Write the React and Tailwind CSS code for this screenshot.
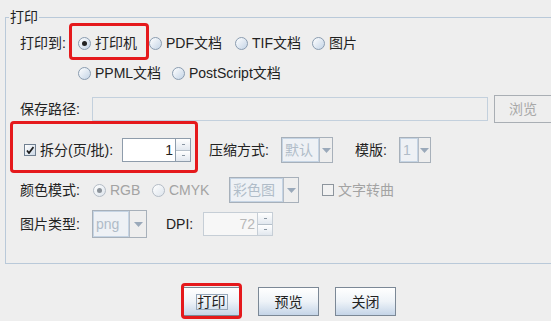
import React from "react";

const FONT = { fontFamily: '"Liberation Sans", "Noto Sans CJK SC", sans-serif' };

function Radio({ checked, disabled }) {
  return (
    <span
      className={
        disabled
          ? "w-[13px] h-[13px] rounded-full border border-[#b4bcc6] bg-linear-to-br from-white to-[#dde4ec] flex items-center justify-center shrink-0"
          : "w-[13px] h-[13px] rounded-full border border-[#8a9cb0] bg-linear-to-br from-white to-[#c4d4e6] flex items-center justify-center shrink-0"
      }
    >
      {checked && (
        <span
          className={
            disabled
              ? "w-[5px] h-[5px] rounded-full bg-[#8c939a]"
              : "w-[5px] h-[5px] rounded-full bg-[#222222]"
          }
        />
      )}
    </span>
  );
}

function RadioItem({ label, checked, disabled, w }) {
  return (
    <div className={"flex items-center shrink-0 " + w}>
      <Radio checked={checked} disabled={disabled} />
      <span
        className={
          disabled
            ? "ml-[4px] text-[#a3a3a3] whitespace-nowrap"
            : "ml-[4px] text-[#222222] whitespace-nowrap"
        }
      >
        {label}
      </span>
    </div>
  );
}

function Arrow() {
  return (
    <svg width="9" height="5" viewBox="0 0 9 5">
      <path d="M0 0 H9 L4.5 5 Z" fill="#9aa9ba" />
    </svg>
  );
}

function Combo({ text, w, tw, h }) {
  return (
    <div className={"flex shrink-0 border border-[#a7b0ba] bg-[#eeeeee] " + w + " " + h}>
      <div className={"flex items-center border border-[#c5d4e4] bg-[#eef1f5] pl-[2px] text-[#b0bcc8] overflow-hidden whitespace-nowrap " + tw}>
        {text}
      </div>
      <div className="flex-1 flex items-center justify-center border-l border-[#b4bcc6]">
        <Arrow />
      </div>
    </div>
  );
}

function Spinner({ value, w, disabled, h }) {
  return (
    <div
      className={
        "flex shrink-0 border " +
        (disabled ? "border-[#c6ced6] " : "border-[#8e9cab] ") +
        w +
        " " +
        h
      }
    >
      <div
        className={
          disabled
            ? "flex-1 flex items-center justify-end pr-[2px] bg-[#f7f7f7] text-[#b8b8b8]"
            : "flex-1 flex items-center justify-end pr-[2px] bg-white text-[#222222]"
        }
      >
        {value}
      </div>
      <div
        className={
          disabled
            ? "w-[15px] flex flex-col border-l border-[#c6ced6]"
            : "w-[15px] flex flex-col border-l border-[#8e9cab]"
        }
      >
        <div className="flex-1 flex items-center justify-center bg-linear-to-b from-white to-[#e2e8ef] border-b border-[#b6c0ca]">
          <span className="block w-[3px] h-[1px] bg-[#8a96a2]" />
        </div>
        <div className="flex-1 flex items-center justify-center bg-linear-to-b from-white to-[#e2e8ef]">
          <span className="block w-[3px] h-[1px] bg-[#8a96a2]" />
        </div>
      </div>
    </div>
  );
}

function Check({ checked, disabled }) {
  return (
    <span
      className={
        disabled
          ? "w-[12px] h-[12px] border border-[#8d959d] bg-[#f2f2f2] flex items-center justify-center shrink-0"
          : "w-[12px] h-[12px] border border-[#6f7f90] bg-linear-to-br from-white to-[#cdd9e7] flex items-center justify-center shrink-0"
      }
    >
      {checked && (
        <svg width="8" height="8" viewBox="0 0 8 8">
          <path d="M1 4.5 L3 7 L7.5 1" stroke="#1e1e1e" strokeWidth="1.8" fill="none" />
        </svg>
      )}
    </span>
  );
}

function Button({ children, focus }) {
  return (
    <div className="w-[61px] h-[29px] border border-[#7b8896] bg-linear-to-b from-white via-[#eef3f8] to-[#c5d5e8] flex items-center justify-center text-[#222222]">
      <span className={focus ? "border border-[#97a8ba] px-[1px] leading-[14px]" : "leading-[14px]"}>{children}</span>
    </div>
  );
}

export default function App() {
  return (
    <div
      className="relative w-[551px] h-[321px] bg-[#eeeeee] overflow-hidden text-[14px] text-[#222222]"
      style={FONT}
    >
      <div className="relative mt-[17px] ml-[5px] w-[570px] h-[247px] border border-[#b9c9d9]">
        <span className="absolute left-[3px] top-[-10px] px-[1px] bg-[#eeeeee] leading-[18px]">打印</span>

        {/* Row 1 */}
        <div className="flex items-center h-[30px] mt-[10px]">
          <span className="ml-[14px] w-[58px] shrink-0 whitespace-nowrap">打印到:</span>
          <RadioItem label="打印机" checked w="w-[71px]" />
          <RadioItem label="PDF文档" w="w-[86px]" />
          <RadioItem label="TIF文档" w="w-[77px]" />
          <RadioItem label="图片" w="w-[60px]" />
        </div>

        {/* Row 2 */}
        <div className="flex items-center h-[30px]">
          <span className="ml-[72px]" />
          <RadioItem label="PPML文档" w="w-[94px]" />
          <RadioItem label="PostScript文档" w="w-[120px]" />
        </div>

        {/* Row 3 */}
        <div className="flex items-center h-[28px] mt-[7px]">
          <span className="ml-[14px] w-[72px] shrink-0 whitespace-nowrap">保存路径:</span>
          <div className="w-[396px] h-[24px] border border-[#c3d0dd] bg-[#eeeeee] shrink-0" />
          <div className="ml-[6px] w-[58px] h-[28px] border border-[#a9aeb4] bg-[#eeeeee] flex items-center justify-center text-[#a8a8a8] shrink-0">
            浏览
          </div>
        </div>

        {/* Row 4 */}
        <div className="flex items-center h-[26px] mt-[14px]">
          <span className="ml-[18px]" />
          <Check checked />
          <span className="ml-[4px] w-[82px] shrink-0 whitespace-nowrap">拆分(页/批):</span>
          <Spinner value="1" w="w-[69px]" h="h-[24px]" />
          <span className="ml-[18px] w-[72px] shrink-0 whitespace-nowrap">压缩方式:</span>
          <Combo text="默认" w="w-[52px]" tw="w-[37px]" h="h-[26px]" />
          <span className="ml-[22px] w-[44px] shrink-0 whitespace-nowrap">模版:</span>
          <Combo text="1" w="w-[32px]" tw="w-[18px]" h="h-[26px]" />
        </div>

        {/* Row 5 */}
        <div className="flex items-center h-[26px] mt-[14px]">
          <span className="ml-[14px] w-[73px] shrink-0 whitespace-nowrap">颜色模式:</span>
          <RadioItem label="RGB" checked disabled w="w-[59px]" />
          <RadioItem label="CMYK" disabled w="w-[77px]" />
          <Combo text="彩色图" w="w-[70px]" tw="w-[53px]" h="h-[26px]" />
          <span className="ml-[23px]" />
          <Check disabled />
          <span className="ml-[4px] text-[#a3a3a3] whitespace-nowrap">文字转曲</span>
        </div>

        {/* Row 6 */}
        <div className="flex items-center h-[28px] mt-[7px]">
          <span className="ml-[14px] w-[72px] shrink-0 whitespace-nowrap">图片类型:</span>
          <Combo text="png" w="w-[55px]" tw="w-[36px]" h="h-[28px]" />
          <span className="ml-[19px] w-[37px] shrink-0 whitespace-nowrap">DPI:</span>
          <Spinner value="72" disabled w="w-[70px]" h="h-[24px]" />
        </div>
      </div>

      {/* Buttons */}
      <div className="flex items-center mt-[23px] ml-[181px] gap-[16px]">
        <Button focus>打印</Button>
        <Button>预览</Button>
        <Button>关闭</Button>
      </div>

      {/* Red highlight annotations */}
      <div className="absolute left-[69px] top-[23px] w-[80px] h-[37px] border-[3px] border-[#e5191c] rounded-[4px]" />
      <div className="absolute left-[10px] top-[121px] w-[188px] h-[52px] border-[3px] border-[#e5191c] rounded-[4px]" />
      <div className="absolute left-[181px] top-[283px] w-[61px] h-[36px] border-[3px] border-[#e5191c] rounded-[4px]" />
    </div>
  );
}
